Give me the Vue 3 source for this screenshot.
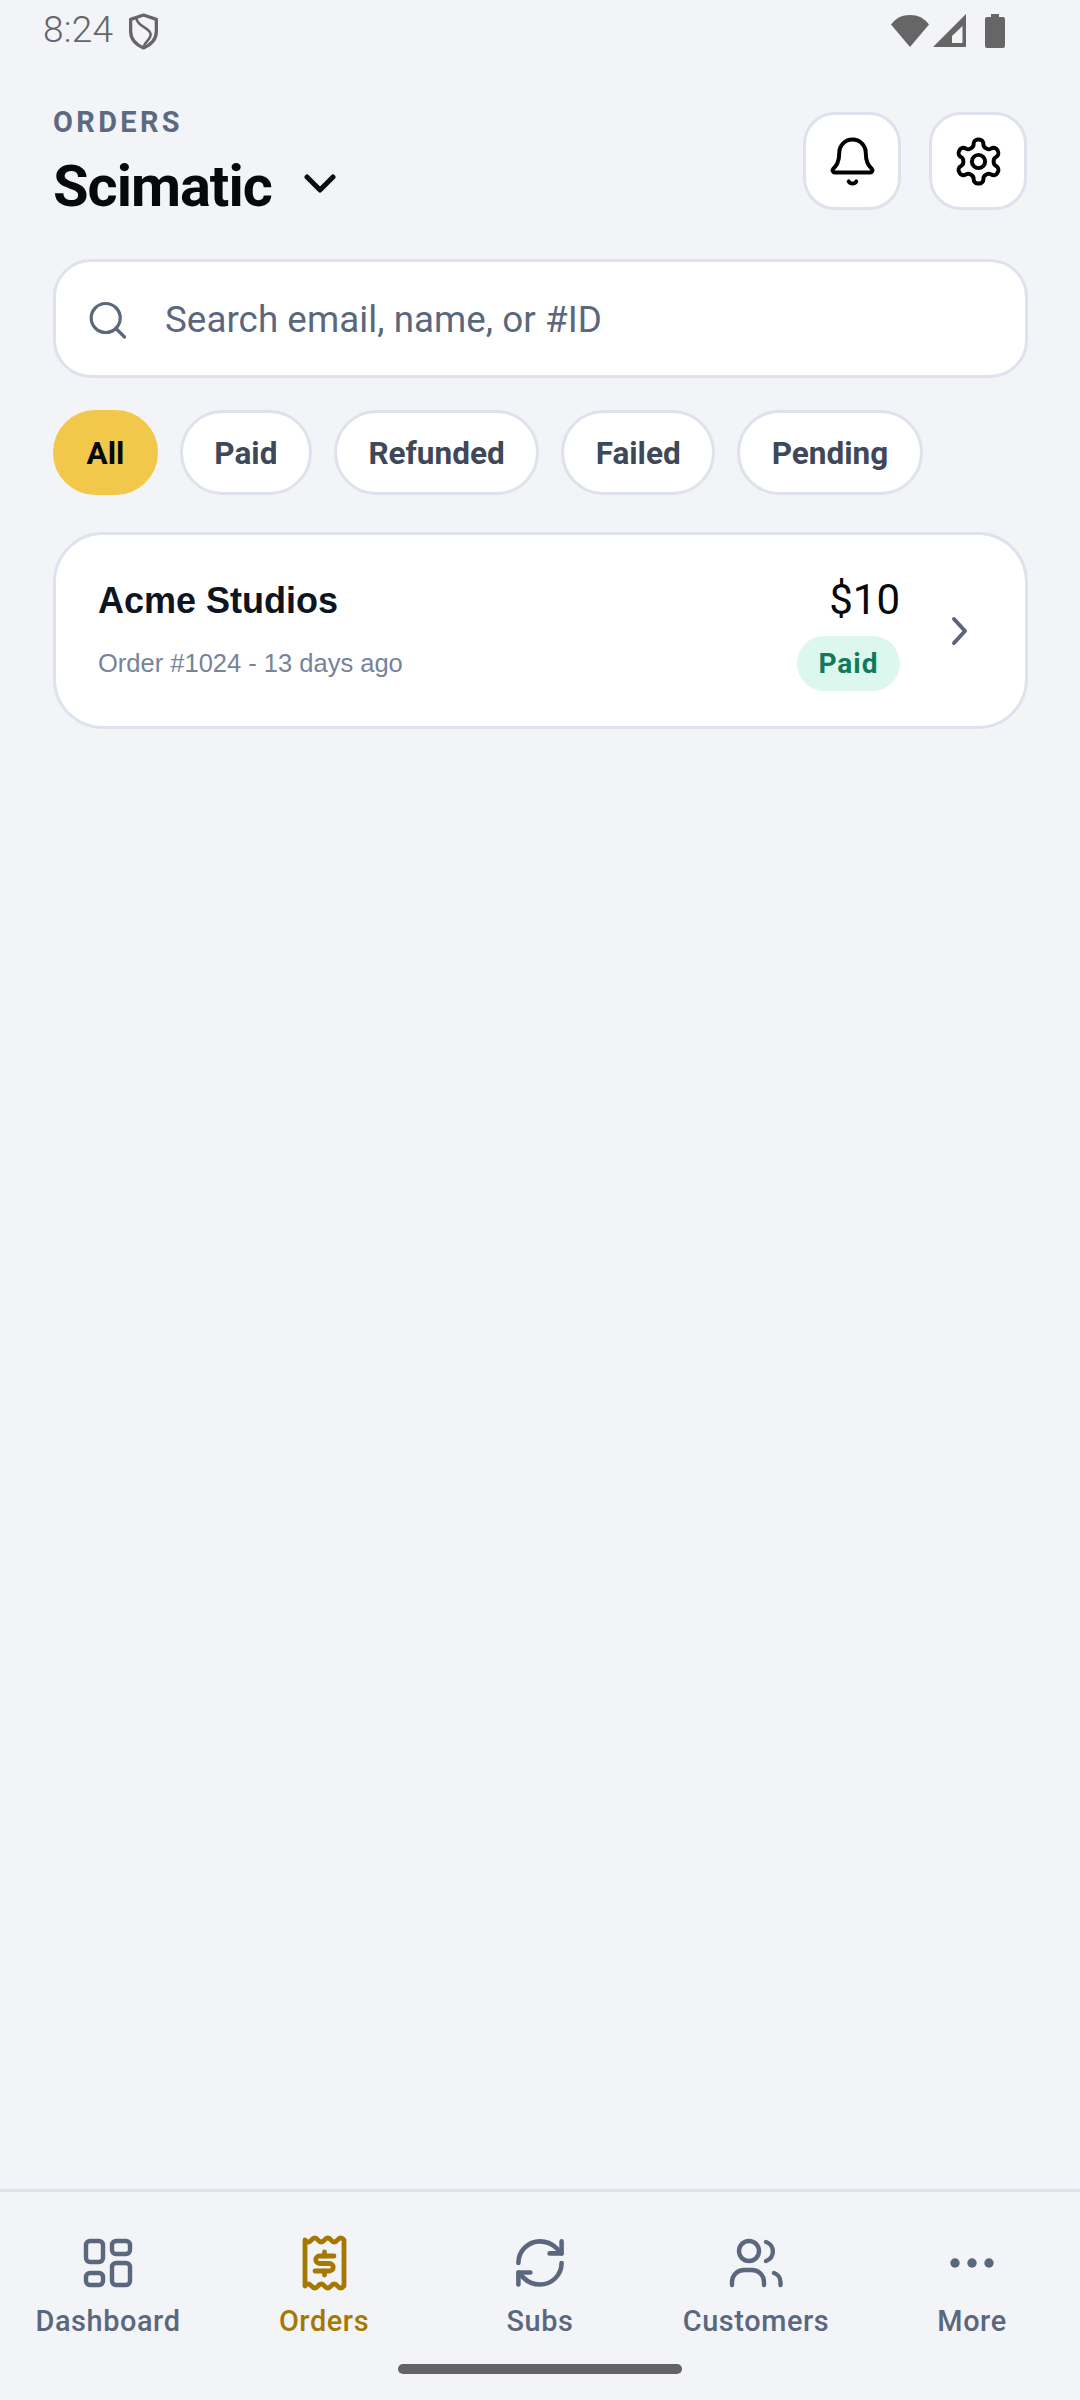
<script setup>
const chips = ["All", "Paid", "Refunded", "Failed", "Pending"];
</script>

<template>
  <div class="screen">
    <div class="status-bar">
      <div class="status-left">
        <span class="time">8:24</span>
        <svg class="shield" width="31" height="37" viewBox="0 0 30 36" fill="none" stroke="#666" stroke-width="3.200">
          <path d="M15 2l12.500 4.200V18c0 7.600-5.400 12.800-12.500 16C7.900 30.800 2.500 25.600 2.500 18V6.200z" stroke-linejoin="round" />
          <path d="M8 5c1 9 14 9 14 16 0 5-5 6-7 12" stroke-width="2.500" />
        </svg>
      </div>
      <div class="status-right">
        <svg width="40" height="33" viewBox="0 0 40 33" fill="#666">
          <path d="M20 33L1 10.500C6 4 12 1 20 1s14 3 19 9.500z" />
        </svg>
        <svg class="signal" width="33" height="33" viewBox="0 0 33 33">
          <path d="M0 33L33 0v33z" fill="#666" />
          <path d="M19 29v-7l10.500-10v17z" fill="#f2f4f8" />
        </svg>
        <svg class="battery" width="20" height="34" viewBox="0 0 20 34" fill="#666">
          <path d="M6 0h8v3h4a2 2 0 0 1 2 2v27a2 2 0 0 1-2 2H2a2 2 0 0 1-2-2V5a2 2 0 0 1 2-2h4z" />
        </svg>
      </div>
    </div>

    <header class="header">
      <div>
        <div class="eyebrow">ORDERS</div>
        <div class="title-row">
          <h1 class="title">Scimatic</h1>
          <svg class="title-chevron" width="32" height="22" viewBox="0 0 32 22" fill="none" stroke="#0b0d10" stroke-width="5" stroke-linecap="round" stroke-linejoin="round">
            <path d="M3 4l13 13L29 4" />
          </svg>
        </div>
      </div>
      <div class="header-actions">
        <button class="icon-btn">
          <svg width="53" height="53" viewBox="0 0 24 24" fill="none" stroke="#000" stroke-width="1.800" stroke-linecap="round" stroke-linejoin="round">
            <path d="M10.268 21a2 2 0 0 0 3.464 0" />
            <path d="M3.262 15.326A1 1 0 0 0 4 17h16a1 1 0 0 0 .74-1.673C19.410 13.956 18 12.499 18 8A6 6 0 0 0 6 8c0 4.499-1.411 5.956-2.738 7.326" />
          </svg>
        </button>
        <button class="icon-btn">
          <svg width="53" height="53" viewBox="0 0 24 24" fill="none" stroke="#000" stroke-width="1.800" stroke-linecap="round" stroke-linejoin="round">
            <path d="M12.220 2h-.44a2 2 0 0 0-2 2v.18a2 2 0 0 1-1 1.730l-.43.25a2 2 0 0 1-2 0l-.15-.08a2 2 0 0 0-2.730.73l-.22.38a2 2 0 0 0 .73 2.730l.15.1a2 2 0 0 1 1 1.720v.51a2 2 0 0 1-1 1.740l-.15.09a2 2 0 0 0-.73 2.730l.22.38a2 2 0 0 0 2.730.73l.15-.08a2 2 0 0 1 2 0l.43.25a2 2 0 0 1 1 1.730V20a2 2 0 0 0 2 2h.44a2 2 0 0 0 2-2v-.18a2 2 0 0 1 1-1.730l.43-.25a2 2 0 0 1 2 0l.15.08a2 2 0 0 0 2.730-.73l.22-.39a2 2 0 0 0-.73-2.730l-.15-.08a2 2 0 0 1-1-1.740v-.5a2 2 0 0 1 1-1.740l.15-.09a2 2 0 0 0 .73-2.730l-.22-.38a2 2 0 0 0-2.730-.73l-.15.08a2 2 0 0 1-2 0l-.43-.25a2 2 0 0 1-1-1.730V4a2 2 0 0 0-2-2z" />
            <circle cx="12" cy="12" r="3" />
          </svg>
        </button>
      </div>
    </header>

    <div class="search">
      <svg width="40" height="40" viewBox="0 0 40 40" fill="none" stroke="#5b677d" stroke-width="3.200" stroke-linecap="round">
        <circle cx="17.700" cy="19" r="14.500" />
        <path d="M28.500 30l8 8" />
      </svg>
      <span class="search-text">Search email, name, or #ID</span>
    </div>

    <div class="chips">
      <div v-for="(chip, i) in chips" :key="chip" class="chip" :class="{ active: i === 0 }">{{ chip }}</div>
    </div>

    <div class="card">
      <div class="card-main">
        <div class="card-name">Acme Studios</div>
        <div class="card-sub">Order #1024 - 13 days ago</div>
      </div>
      <div class="card-side">
        <div class="amount">$10</div>
        <div class="badge">Paid</div>
      </div>
      <svg class="card-chevron" width="18" height="30" viewBox="0 0 18 30" fill="none" stroke="#5b6478" stroke-width="4" stroke-linecap="round" stroke-linejoin="round">
        <path d="M4 3l11 12L4 27" />
      </svg>
    </div>

    <nav class="nav">
      <div class="nav-item">
        <svg width="64" height="64" viewBox="0 0 64 64" fill="none" stroke="currentColor" stroke-width="4.400" stroke-linejoin="round">
          <rect x="10" y="10" width="17" height="21" rx="4" />
          <rect x="10" y="42" width="17" height="12" rx="4" />
          <rect x="36" y="10" width="18" height="13" rx="4" />
          <rect x="36" y="32" width="18" height="22" rx="4" />
        </svg>
        <span>Dashboard</span>
      </div>
      <div class="nav-item current">
        <svg width="64" height="64" viewBox="0 0 64 64" fill="none" stroke="currentColor" stroke-width="4.800" stroke-linecap="round" stroke-linejoin="round">
          <path d="M13 9q3.250 4 6.500 0q3.250-4 6.500 0q3.250 4 6.500 0q3.250-4 6.500 0q3.250 4 6.500 0q3.250-4 6.500 0V55q-3.250 4-6.500 0q-3.250-4-6.500 0q-3.250 4-6.500 0q-3.250-4-6.500 0q-3.250 4-6.500 0q-3.250-4-6.500 0z" />
          <path d="M42 25H27.500a3.750 3.750 0 0 0 0 7.500h10a3.750 3.750 0 0 1 0 7.500H23" />
          <path d="M32.500 21v4M32.500 40v4" />
        </svg>
        <span>Orders</span>
      </div>
      <div class="nav-item">
        <svg width="64" height="64" viewBox="-1.330 -1.330 26.670 26.670" fill="none" stroke="currentColor" stroke-width="1.900" stroke-linecap="round" stroke-linejoin="round">
          <path d="M3 12a9 9 0 0 1 9-9 9.750 9.750 0 0 1 6.740 2.740L21 8" />
          <path d="M21 3v5h-5" />
          <path d="M21 12a9 9 0 0 1-9 9 9.750 9.750 0 0 1-6.740-2.740L3 16" />
          <path d="M8 16H3v5" />
        </svg>
        <span>Subs</span>
      </div>
      <div class="nav-item">
        <svg width="64" height="64" viewBox="0 0 64 64" fill="none" stroke="currentColor" stroke-width="4.400" stroke-linecap="round">
          <circle cx="25" cy="20" r="10" />
          <path d="M42 11a10 10 0 0 1 0 19" />
          <path d="M8 54v-3a12 12 0 0 1 12-12h8a12 12 0 0 1 12 12v3" />
          <path d="M56.500 54v-3a9.500 9.500 0 0 0-6.500-9" />
        </svg>
        <span>Customers</span>
      </div>
      <div class="nav-item">
        <svg width="64" height="64" viewBox="0 0 64 64" fill="currentColor">
          <circle cx="15" cy="32" r="4.700" />
          <circle cx="32" cy="32" r="4.700" />
          <circle cx="49" cy="32" r="4.700" />
        </svg>
        <span>More</span>
      </div>
      <div class="home-bar"></div>
    </nav>
  </div>
</template>

<style scoped>
.screen {
  min-height: 2400px;
  display: flex;
  flex-direction: column;
  background: #f2f4f8;
  font-family: Roboto, sans-serif;
}

.status-bar {
  height: 62px;
  padding: 0 75px 0 43px;
  display: flex;
  justify-content: space-between;
  align-items: flex-start;
}

.status-left {
  display: flex;
  align-items: flex-start;
  gap: 15px;
}

.time {
  font-size: 37px;
  line-height: 62px;
  margin-top: -1px;
  color: #636569;
  font-weight: 300;
  letter-spacing: 0.2px;
}

.shield {
  margin-top: 13px;
}

.status-right {
  display: flex;
  align-items: flex-start;
  padding-top: 14px;
}

.signal {
  margin-left: 3px;
}

.battery {
  margin-left: 19px;
}

.header {
  margin-top: 49px;
  padding: 0 53px;
  display: flex;
  justify-content: space-between;
  align-items: flex-start;
}

.eyebrow {
  font-size: 28.875px;
  line-height: 32px;
  margin-top: -5px;
  font-weight: 700;
  letter-spacing: 3.4px;
  color: #5d6980;
}

.title-row {
  display: flex;
  align-items: center;
  margin-top: 14px;
}

.title {
  margin: 0;
  font-size: 57.75px;
  line-height: 68px;
  font-weight: 700;
  color: #06080b;
  letter-spacing: -1px;
}

.title-chevron {
  margin-left: 32px;
  margin-top: -4px;
}

.header-actions {
  display: flex;
  gap: 28px;
  margin-top: 1px;
}

.icon-btn {
  width: 98px;
  height: 98px;
  box-sizing: border-box;
  padding: 0;
  background: #fff;
  border: 3px solid #dde2ec;
  border-radius: 32px;
  display: flex;
  align-items: center;
  justify-content: center;
}

.search {
  margin: 39px 52px 0 53px;
  height: 119px;
  box-sizing: border-box;
  background: #fff;
  border: 3px solid #dde2ec;
  border-radius: 38px;
  display: flex;
  align-items: center;
  padding-left: 32px;
}

.search-text {
  margin-left: 37px;
  padding-top: 2px;
  font-size: 36.75px;
  letter-spacing: 0.05px;
  color: #5b677d;
}

.chips {
  margin: 32px 53px 0;
  display: flex;
  gap: 22px;
}

.chip {
  height: 85px;
  box-sizing: border-box;
  padding: 2px 31.5px 0;
  display: flex;
  align-items: center;
  background: #fff;
  border: 3px solid #dde2ec;
  border-radius: 43px;
  font-size: 31.5px;
  font-weight: 700;
  color: #3e4859;
}

.chip.active {
  padding: 2px 30.5px 0;
  background: #f2c84b;
  border-color: #f2c84b;
  color: #07090c;
}

.card {
  margin: 37px 52px 0 53px;
  height: 197px;
  box-sizing: border-box;
  background: #fff;
  border: 3px solid #dde2ec;
  border-radius: 50px;
  display: flex;
  align-items: flex-start;
  padding: 0 57px 0 42px;
}

.card-main {
  flex: 1;
  margin-top: 44px;
  font-family: "Liberation Sans", sans-serif;
}

.card-name {
  font-size: 36px;
  line-height: 44px;
  font-weight: 700;
  color: #0e1420;
}

.card-sub {
  margin-top: 25px;
  font-size: 25.5px;
  line-height: 30px;
  color: #76839a;
}

.card-side {
  display: flex;
  flex-direction: column;
  align-items: flex-end;
  margin-top: 41px;
}

.amount {
  font-size: 42px;
  line-height: 48px;
  color: #06080b;
}

.badge {
  margin-top: 12px;
  height: 55px;
  padding: 0 21.5px;
  display: flex;
  align-items: center;
  border-radius: 28px;
  background: #dcf8ee;
  color: #107a5a;
  font-size: 28px;
  font-weight: 700;
  letter-spacing: 1px;
}

.card-chevron {
  margin-left: 50px;
  align-self: center;
}

.nav {
  margin-top: auto;
  height: 211px;
  box-sizing: border-box;
  position: relative;
  border-top: 3px solid #dde2ec;
  display: grid;
  grid-template-columns: repeat(5, 216px);
  justify-content: start;
}

.nav-item {
  display: flex;
  flex-direction: column;
  align-items: center;
  padding-top: 39px;
  color: #5b677d;
  font-size: 28.875px;
  font-weight: 500;
  letter-spacing: 0.6px;
}

.nav-item span {
  margin-top: 8px;
  line-height: 36px;
}

.nav-item.current {
  color: #a67800;
}

.home-bar {
  position: absolute;
  left: 398px;
  bottom: 26px;
  width: 284px;
  height: 10px;
  border-radius: 5px;
  background: #636366;
}
</style>
